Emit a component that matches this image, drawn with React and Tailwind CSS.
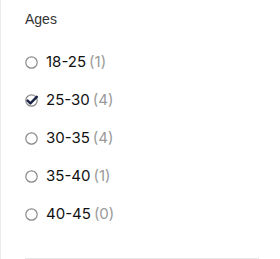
import React, { useState } from 'react';

const ages = [
    { label: '18-25', count: 1 },
    { label: '25-30', count: 4 },
    { label: '30-35', count: 4 },
    { label: '35-40', count: 1 },
    { label: '40-45', count: 0 },
];

const Mark = ({ checked }) => (
    <svg width="13" height="13" viewBox="0 0 13 13" className="shrink-0">
        <circle cx="6.5" cy="6.5" r="5.7" fill="none" stroke="#8a8a8a" strokeWidth="1.2" />
        {checked && (
            <path d="M2.6 6.6 L5.4 9.4 L11.8 2.8" fill="none" stroke="#1b2548" strokeWidth="2.4" strokeLinecap="round" strokeLinejoin="round" />
        )}
    </svg>
);

const App = () => {
    const [selected, setSelected] = useState('25-30');

    return (
        <div className="w-[280px] h-[259px] bg-white border-l border-[#ececec] pl-[24px] pr-[21px] pt-[11px]">
            <h3 className="text-[14px] leading-[16px] text-[#333] font-['Liberation_Sans',Arial,sans-serif]">Ages</h3>
            <ul className="mt-[25px] flex flex-col gap-[18px]">
                {ages.map(a => (
                    <li
                        key={a.label}
                        onClick={() => setSelected(a.label)}
                        className="flex items-center gap-[8px] h-[20px] cursor-pointer font-['Inter',sans-serif] text-[15px]"
                    >
                        <Mark checked={selected === a.label} />
                        <span className="text-[#111]">
                            {a.label}
                            <span className="ml-[3px] text-[#9a9a9a]">({a.count})</span>
                        </span>
                    </li>
                ))}
            </ul>
            <div className="mt-[34px] border-t border-[#e6e6e6]" />
        </div>
    );
};

export default App;
